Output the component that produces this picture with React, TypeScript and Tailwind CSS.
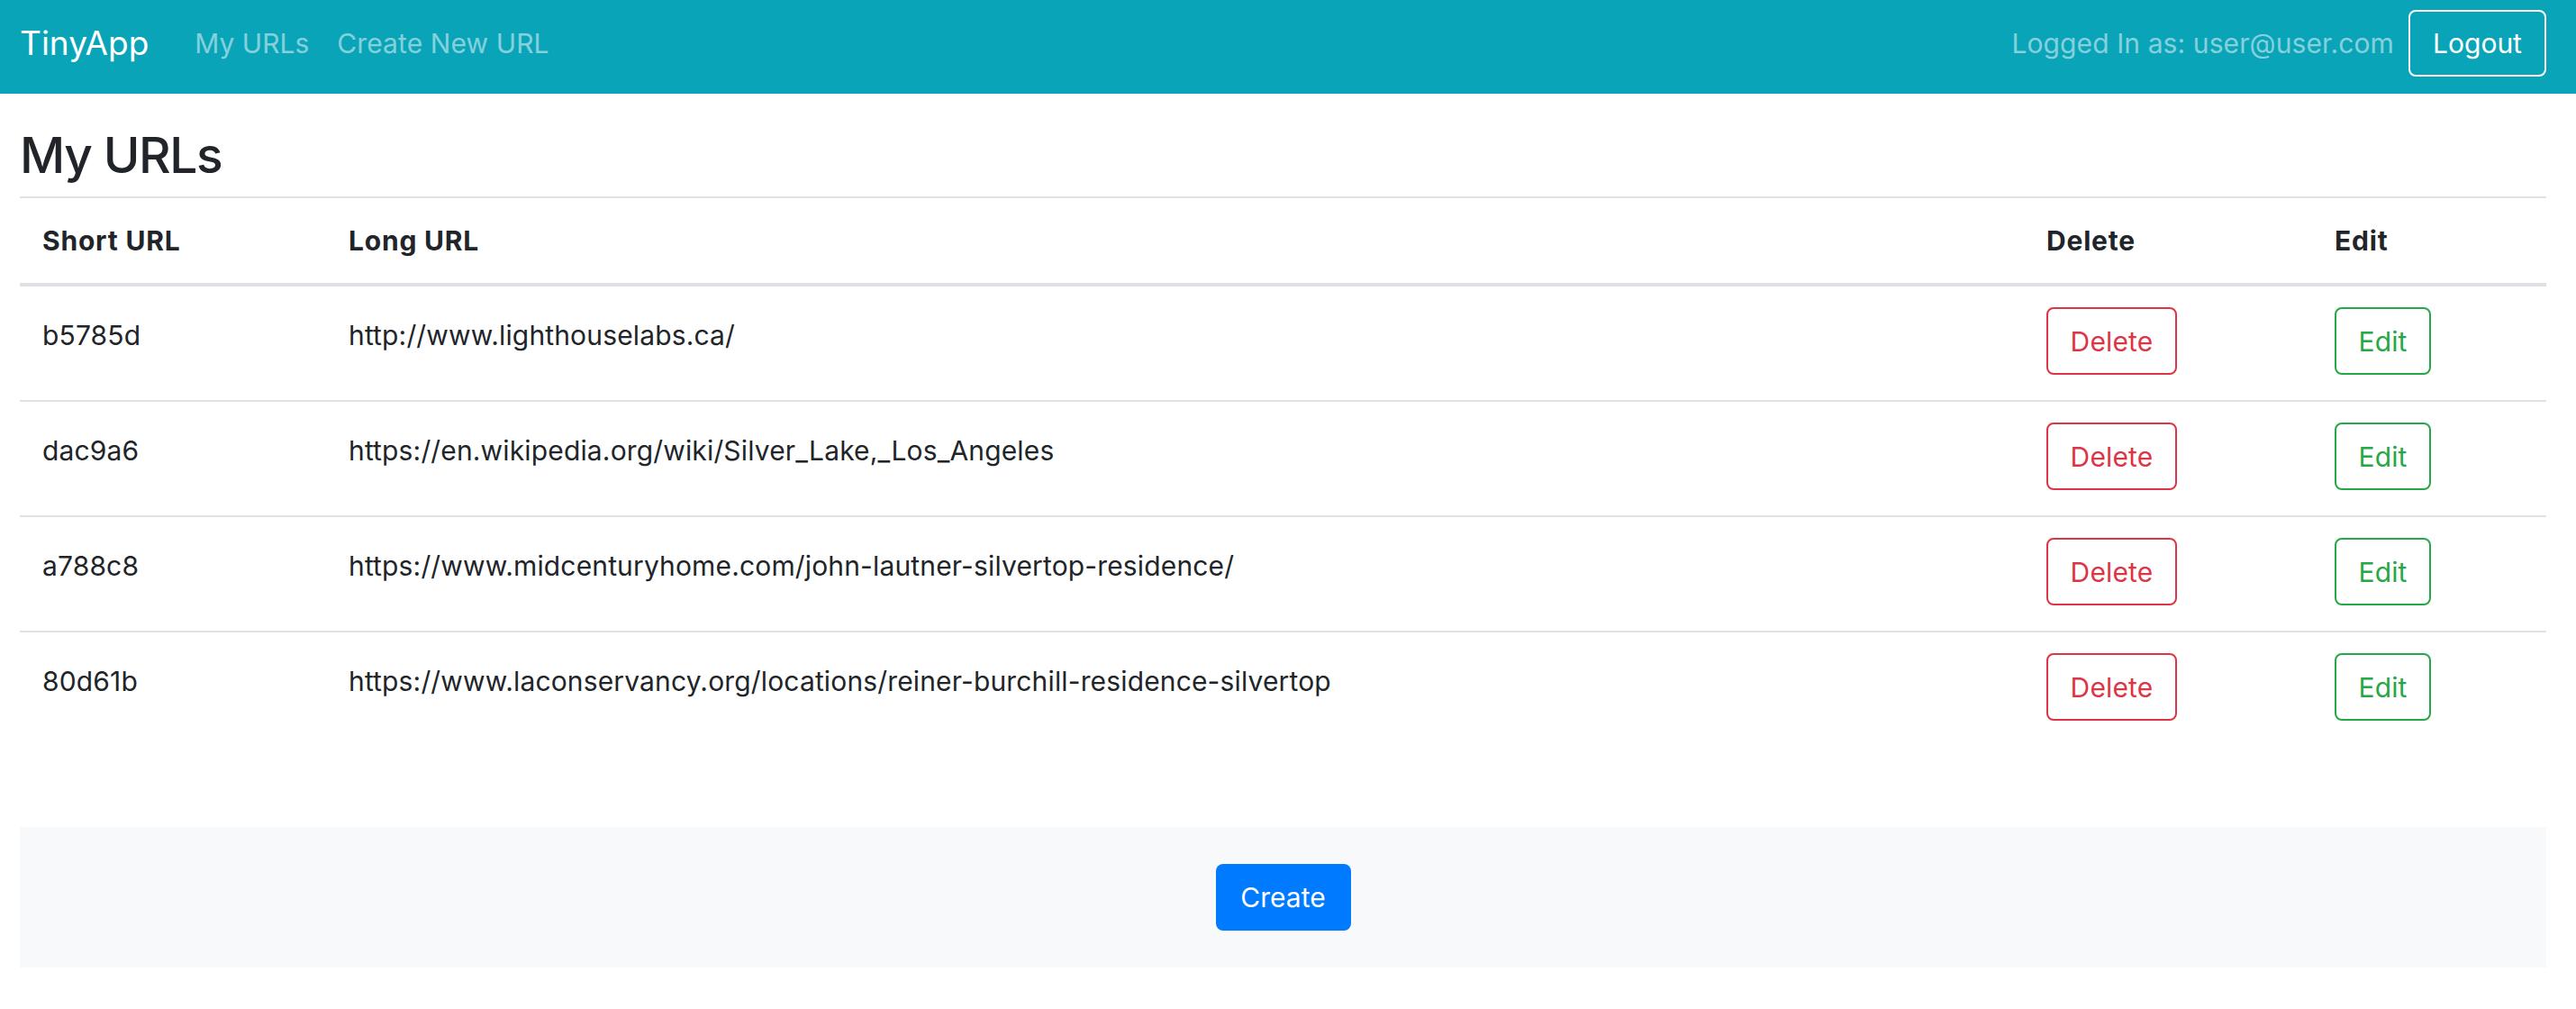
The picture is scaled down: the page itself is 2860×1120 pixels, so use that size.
import React from "react";

const rows = [
  { short: "b5785d", long: "http://www.lighthouselabs.ca/" },
  { short: "dac9a6", long: "https://en.wikipedia.org/wiki/Silver_Lake,_Los_Angeles" },
  { short: "a788c8", long: "https://www.midcenturyhome.com/john-lautner-silvertop-residence/" },
  { short: "80d61b", long: "https://www.laconservancy.org/locations/reiner-burchill-residence-silvertop" },
];

export default function App() {
  return (
    <div
      className="min-h-[1120px] bg-white text-[#212529]"
      style={{ fontFamily: "Inter, 'Noto Sans', 'Liberation Sans', sans-serif" }}
    >
      <nav className="flex h-[104px] items-center bg-[#0aa4b9] pb-[8px] pl-[22px] pr-[33px]">
        <span className="text-[37px] leading-[54px] text-white">TinyApp</span>
        <span className="ml-[51px] text-[30px] leading-[44px] text-white/50">My URLs</span>
        <span className="ml-[31px] text-[30px] leading-[44px] tracking-[0.1px] text-white/50">Create New URL</span>
        <div className="ml-auto flex items-center gap-[16px]">
          <span className="text-[30px] leading-[44px] tracking-[0.1px] text-white/50">Logged In as: user@user.com</span>
          <button className="flex h-[74px] w-[153px] items-center justify-center rounded-[8px] border-2 border-white text-[30px] leading-[44px] text-white">
            Logout
          </button>
        </div>
      </nav>

      <main className="pl-[22px] pr-[33px]">
        <h2 className="mb-[12px] mt-[34px] text-[55px] font-medium leading-[68px] tracking-[-1.4px]">My URLs</h2>
        <table className="w-full border-collapse text-left text-[30px] leading-[44px] tracking-[0.15px]">
          <thead>
            <tr className="border-t-2 border-b-4 border-[#dee2e6]">
              <th className="w-[340px] px-[25px] py-[25px] font-bold tracking-[0.8px]">Short URL</th>
              <th className="px-[25px] py-[25px] font-bold tracking-[0.8px]">Long URL</th>
              <th className="w-[320px] px-[25px] py-[25px] font-bold tracking-[0.8px]">Delete</th>
              <th className="w-[260px] px-[25px] py-[25px] font-bold tracking-[0.8px]">Edit</th>
            </tr>
          </thead>
          <tbody>
            {rows.map((r, i) => (
              <tr key={r.short} className={i === 0 ? "" : "border-t-2 border-[#dee2e6]"}>
                <td className="px-[25px] pb-[26px] pt-[32px] align-top">{r.short}</td>
                <td className="px-[25px] pb-[26px] pt-[32px] align-top">{r.long}</td>
                <td className="px-[25px] pb-[28px] pt-[23px] align-top">
                  <button className="flex h-[75px] w-[145px] items-center justify-center rounded-[8px] border-2 border-[#dc3545] text-[30px] text-[#dc3545]">
                    Delete
                  </button>
                </td>
                <td className="px-[25px] pb-[28px] pt-[23px] align-top">
                  <button className="flex h-[75px] w-[107px] items-center justify-center rounded-[8px] border-2 border-[#28a745] text-[30px] text-[#28a745]">
                    Edit
                  </button>
                </td>
              </tr>
            ))}
          </tbody>
        </table>
        <div className="mt-[90px] flex h-[156px] items-center justify-center bg-[#f8f9fa]">
          <button className="flex h-[74px] w-[150px] items-center justify-center rounded-[8px] bg-[#007bff] text-[30px] text-white">
            Create
          </button>
        </div>
      </main>
    </div>
  );
}
